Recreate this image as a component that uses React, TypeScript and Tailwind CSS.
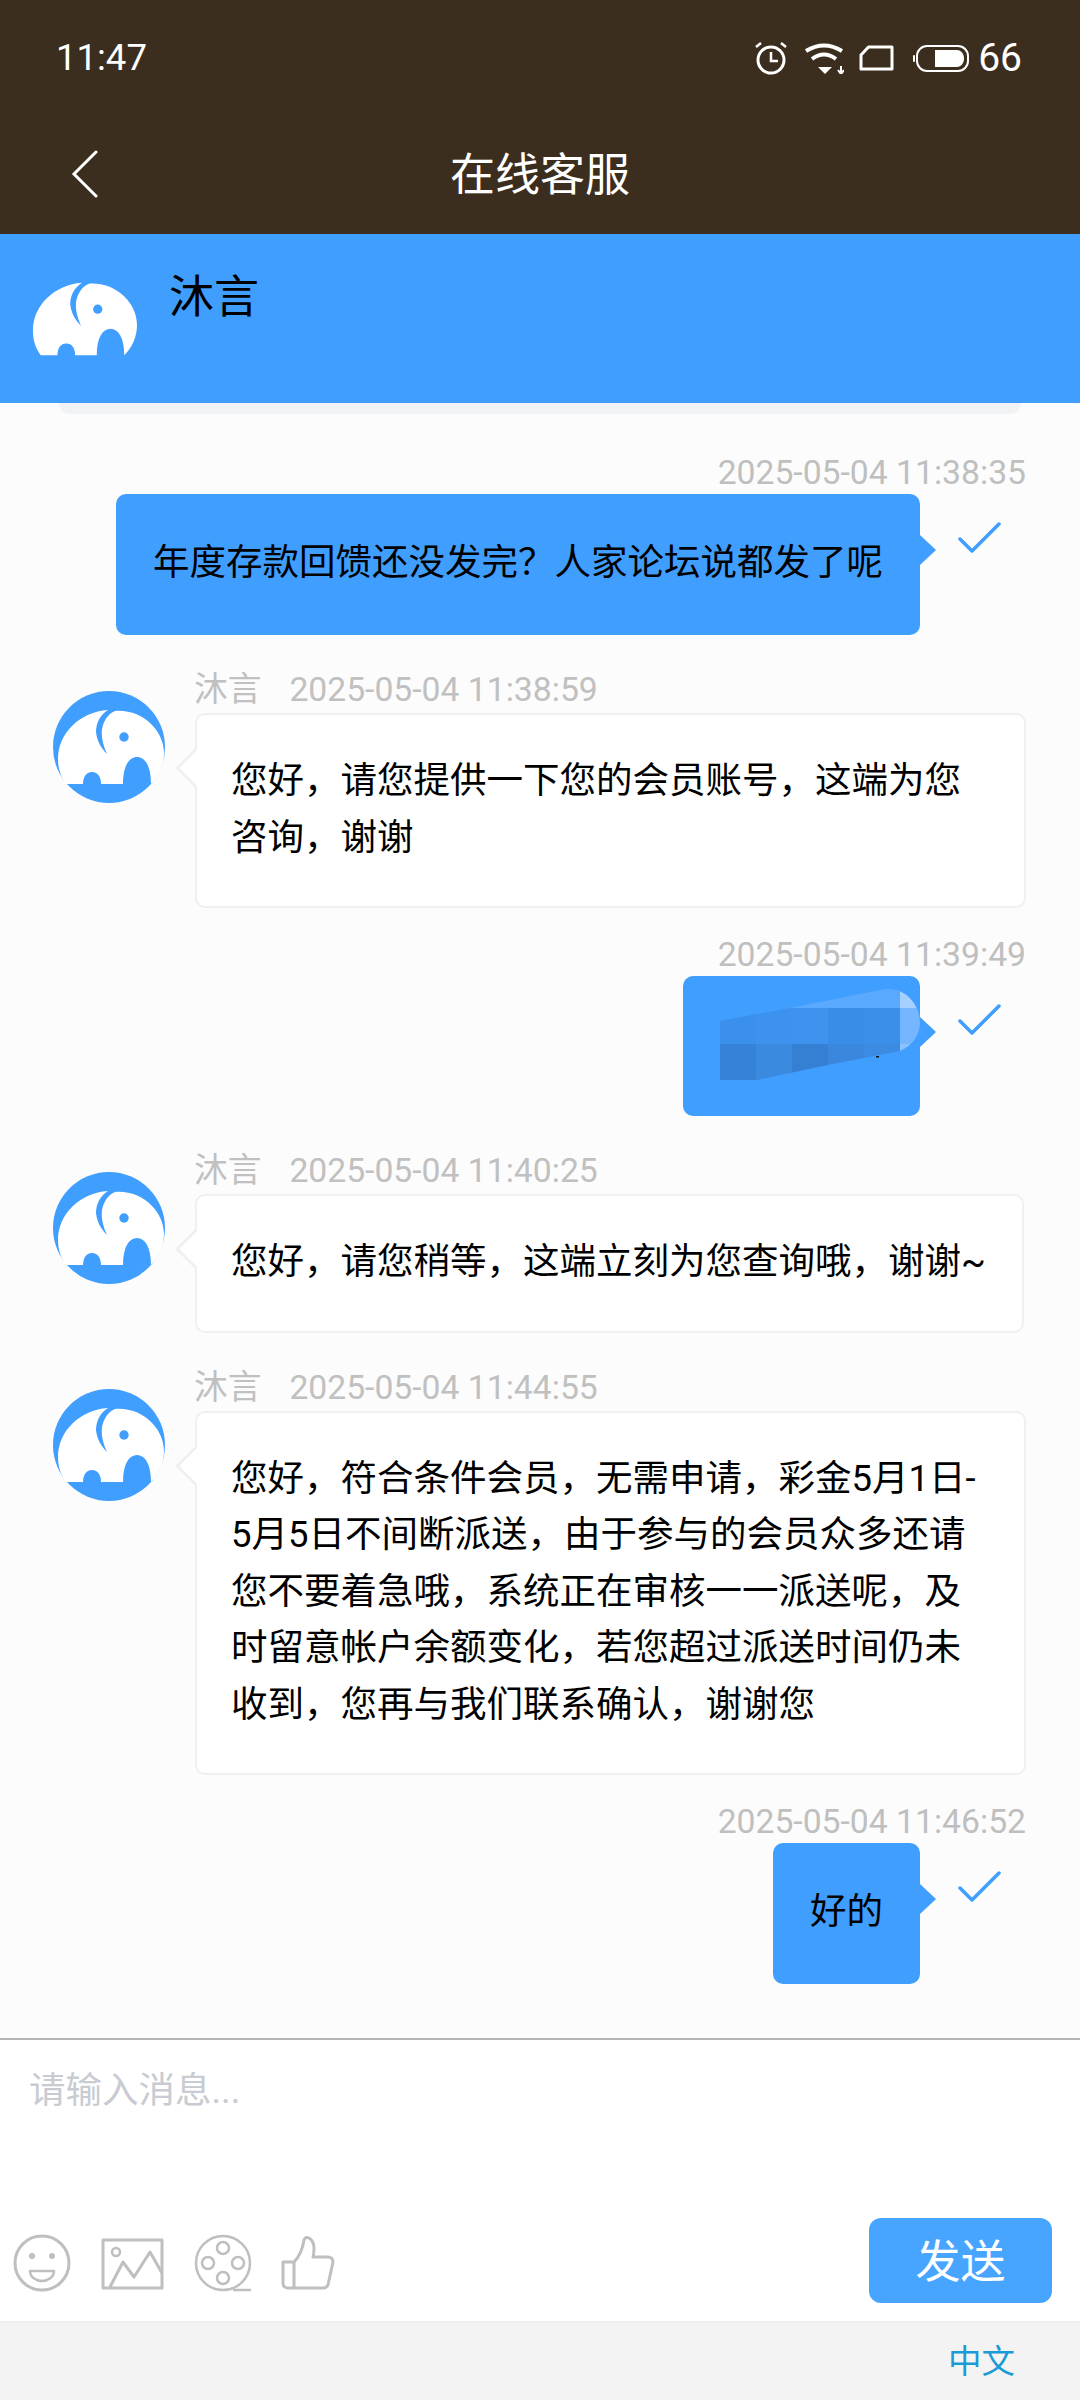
const FONT = "font-['Roboto','Noto_Sans_CJK_SC',sans-serif]";

type Message =
  | { id: number; from: "me"; time: string; text?: string }
  | { id: number; from: "agent"; time: string; text: string };

const messages: Message[] = [
  { id: 1, from: "me", time: "2025-05-04 11:38:35", text: "年度存款回馈还没发完\uFF1F人家论坛说都发了呢" },
  { id: 2, from: "agent", time: "2025-05-04 11:38:59", text: "您好\uFF0C请您提供一下您的会员账号\uFF0C这端为您咨询\uFF0C谢谢" },
  { id: 3, from: "me", time: "2025-05-04 11:39:49" },
  { id: 4, from: "agent", time: "2025-05-04 11:40:25", text: "您好\uFF0C请您稍等\uFF0C这端立刻为您查询哦\uFF0C谢谢~" },
  {
    id: 5,
    from: "agent",
    time: "2025-05-04 11:44:55",
    // zero-width space lets the date range wrap after the hyphen
    text: "您好\uFF0C符合条件会员\uFF0C无需申请\uFF0C彩金5月1日-\u200B5月5日不间断派送\uFF0C由于参与的会员众多还请您不要着急哦\uFF0C系统正在审核一一派送呢\uFF0C及时留意帐户余额变化\uFF0C若您超过派送时间仍未收到\uFF0C您再与我们联系确认\uFF0C谢谢您",
  },
  { id: 6, from: "me", time: "2025-05-04 11:46:52", text: "好的" },
];

const Elephant = ({ circle, size = 112 }: { circle?: boolean; size?: number }) => (
  <svg width={size} height={size} viewBox="0 0 112 112" className="shrink-0">
    {circle && <circle cx="56" cy="56" r="56" fill="#409eff" />}
    <path
      d="M13 93C7 85 5 76 5 68C5 42 27 21 55 19C47 24 43 32 43 41C44 50 48 57 54 63C50 54 48 46 49 38C51 29 55 23 62 20C90 18 111 40 111 62C111 74 106 85 98 93C98 75 92 66 84 66C76 66 70 75 70 93H48C48 86 45 81 39 81C33 81 30 86 30 93Z"
      fill="#fff"
    />
    <circle cx="71" cy="46" r="4.7" fill="#409eff" />
  </svg>
);

const Check = () => (
  <svg width="44" height="34" viewBox="0 0 44 34" fill="none" className="mt-[27px] ml-[38px] mr-[24px]">
    <path d="M2 18L14 30L41 3" stroke="#409eff" strokeWidth="3.5" strokeLinecap="round" strokeLinejoin="round" />
  </svg>
);

// mosaic over the account number in the sent bubble
const cells: [number, number, number, number, string][] = [
  [37, 13, 180, 19, "#59a9ff"],
  [217, 13, 20, 19, "#a4cfff"],
  [37, 32, 36, 36, "#3a90ea"],
  [73, 32, 36, 36, "#3c92ec"],
  [109, 32, 36, 36, "#3d93ee"],
  [145, 32, 36, 36, "#3a8de6"],
  [181, 32, 36, 36, "#3a8fe9"],
  [217, 32, 20, 36, "#74b6ff"],
  [37, 68, 36, 36, "#3582d8"],
  [73, 68, 36, 36, "#3a8ae0"],
  [109, 68, 36, 36, "#3680d4"],
  [145, 68, 36, 36, "#3a88de"],
  [181, 68, 36, 36, "#3c8ae2"],
  [217, 68, 20, 36, "#8cc2ff"],
];

const Mosaic = () => (
  <svg width="237" height="140" viewBox="0 0 237 140" className="absolute left-0 top-0">
    <defs>
      <clipPath id="mosaic-clip">
        <path d="M37 45L107 32L197 14C205 12 215 13 222 18C232 25 237 36 237 47C237 59 229 70 217 75L145 89L74 104H37Z" />
      </clipPath>
    </defs>
    <g clipPath="url(#mosaic-clip)">
      {cells.map(([x, y, w, h, fill]) => (
        <rect key={`${x}-${y}`} x={x} y={y} width={w} height={h} fill={fill} />
      ))}
    </g>
    <rect x="193" y="80" width="3" height="1.5" fill="#111" />
  </svg>
);

const SentMessage = ({ time, text }: { time: string; text?: string }) => (
  <div className="mt-[27px] pr-[54px] flex flex-col items-end">
    <div className="h-[40px] leading-[40px] text-[33.7px] text-[#bfbfbf]">{time}</div>
    <div className="flex items-start mt-px">
      <div className="relative">
        {text ? (
          <div className="rounded-[10px] bg-[#409eff] pl-[37px] pr-[37px] pt-[40px] pb-[44px] text-[36.5px] leading-[57px] text-black whitespace-nowrap">
            {text}
          </div>
        ) : (
          <div className="relative w-[237px] h-[140px] rounded-[10px] bg-[#409eff] overflow-hidden">
            <Mosaic />
          </div>
        )}
        <div className="absolute right-[-16px] top-[41px] w-0 h-0 border-y-[15px] border-y-transparent border-l-[16px] border-l-[#409eff]" />
      </div>
      <Check />
    </div>
  </div>
);

const AgentMessage = ({ time, text }: { time: string; text: string }) => (
  <div className="mt-[33px] pl-[53px] pr-[54px] flex items-start gap-[30px]">
    <div className="mt-[23px]">
      <Elephant circle />
    </div>
    <div className="min-w-0 flex-1">
      <div className="h-[45px] flex items-center gap-[28px] text-[33.7px] text-[#c0c0c0]">
        <span className="-ml-px">沐言</span>
        <span>{time}</span>
      </div>
      <div className="relative w-fit max-w-[831px] rounded-[10px] border-2 border-[#f0f0f0] bg-white pl-[34px] pr-[36px] pt-[38px] pb-[40px] text-[36.5px] leading-[56.5px] text-black">
        <div className="absolute left-[-16px] top-[39px] w-[28px] h-[28px] rotate-45 border-l-[3px] border-b-[3px] border-[#f0f0f0] bg-white" />
        <div className="relative">{text}</div>
      </div>
    </div>
  </div>
);

const StatusIcons = () => (
  <div className="flex items-center">
    <svg width="34" height="34" viewBox="0 0 34 34" fill="none" stroke="#fff" strokeWidth="3">
      <circle cx="17" cy="19" r="13" />
      <path d="M17 11V20H24" strokeWidth="2.5" />
      <path d="M2 6L7 2M32 6L27 2" strokeWidth="2.5" />
    </svg>
    <svg width="40" height="31" viewBox="0 0 40 31" fill="none" className="ml-[16px]">
      <path d="M2 8Q20 -3 38 8" stroke="#fff" strokeWidth="4" />
      <path d="M8 16Q20 7 32 16" stroke="#fff" strokeWidth="4" />
      <path d="M14 24H28L21 31Z" fill="#fff" />
      <path d="M37 23V29M34 27L37 31L40 27" stroke="#fff" strokeWidth="2" />
    </svg>
    <svg width="35" height="26" viewBox="0 0 35 26" fill="none" className="ml-[15px]">
      <path d="M2 24V10L9.5 2H33V24Z" stroke="#fff" strokeWidth="3" strokeLinejoin="round" />
    </svg>
    <svg width="56" height="27" viewBox="0 0 56 27" fill="none" className="ml-[19px]">
      <rect x="4" y="1" width="51" height="25" rx="10" stroke="#fff" strokeWidth="2" />
      <path d="M22 5H44C48 5 51 9 51 13.500C51 18 48 22 44 22H22Z" fill="#fff" />
      <path d="M1 11V16" stroke="#fff" strokeWidth="2" strokeLinecap="round" />
    </svg>
    <span className="ml-[9px] text-[39px] leading-none text-white">66</span>
  </div>
);

const ToolIcons = () => (
  <div className="flex items-center gap-[28px] text-[#bfbfbf] mb-[9px]">
    <svg width="60" height="60" viewBox="0 0 60 60" fill="none" stroke="currentColor" strokeWidth="3">
      <circle cx="30" cy="29" r="27" />
      <circle cx="20" cy="22" r="3" fill="currentColor" stroke="none" />
      <circle cx="40" cy="22" r="3" fill="currentColor" stroke="none" />
      <path d="M18 37H42C42 43 36 47 30 47C24 47 18 43 18 37Z" strokeWidth="2.500" strokeLinejoin="round" />
    </svg>
    <svg width="64" height="60" viewBox="0 0 64 60" fill="none" stroke="currentColor" strokeWidth="3">
      <rect x="3" y="6" width="59" height="48" strokeLinejoin="round" />
      <circle cx="16" cy="18" r="4" strokeWidth="2.500" />
      <path d="M10 53L23 28L34 43L50 18L62 39" strokeLinejoin="round" />
    </svg>
    <svg width="60" height="60" viewBox="0 0 60 60" fill="none" stroke="currentColor" strokeWidth="2.500" className="ml-px">
      <circle cx="30" cy="29" r="27" />
      <circle cx="30" cy="14" r="6" />
      <circle cx="30" cy="44" r="6" />
      <circle cx="15" cy="29" r="6" />
      <circle cx="45" cy="29" r="6" />
      <path d="M40 56H58" />
    </svg>
    <svg width="55" height="60" viewBox="0 0 55 60" fill="none" stroke="currentColor" strokeWidth="3" strokeLinejoin="round">
      <path d="M2 28H13C17 24 21 19 23 6C24 3 26 3 28 4C33 7 34 14 32 23H47C50 23 52 25 52 28L47 51C46 53 44 54 42 54H7C4 54 2 52 2 49Z" />
      <path d="M13 28V54" />
    </svg>
  </div>
);

export default function App() {
  return (
    <div className={`${FONT} w-[1080px] h-[2400px] flex flex-col bg-[#fcfcfc] overflow-hidden`}>
      <header className="h-[234px] bg-[#3c2e1f] shrink-0">
        <div className="h-[116px] pl-[56px] pr-[58px] flex items-center justify-between">
          <span className="text-[36.5px] leading-none text-white">11:47</span>
          <StatusIcons />
        </div>
        <div className="h-[118px] grid grid-cols-[1fr_auto_1fr] items-center">
          <svg width="28" height="48" viewBox="0 0 28 48" fill="none" className="ml-[71px] -mt-[2px]">
            <path d="M25 2L3 24L25 46" stroke="#fff" strokeWidth="3" strokeLinecap="round" />
          </svg>
          <h1 className="text-[45px] leading-none font-normal text-white mt-px">在线客服</h1>
        </div>
      </header>

      <div className="h-[169px] shrink-0 bg-[#409eff] pl-[28px] flex items-center gap-[31px]">
        <Elephant size={110} />
        <span className="text-[45px] leading-none text-black -mt-[42px]">沐言</span>
      </div>

      <main className="flex-1 min-h-0 overflow-hidden flex flex-col">
        <div className="mx-[59px] mb-[12px] h-[11px] shrink-0 rounded-b-[18px] bg-[#f1f3f5]" />
        {messages.map((m) =>
          m.from === "me" ? (
            <SentMessage key={m.id} time={m.time} text={m.text} />
          ) : (
            <AgentMessage key={m.id} time={m.time} text={m.text} />
          ),
        )}
      </main>

      <div className="h-[283px] shrink-0 border-t-2 border-[#b5b5b5] bg-white flex flex-col">
        <div className="mt-[26px] pl-[29px] h-[50px] leading-[50px] text-[36.5px] text-[#c8cbd1]">请输入消息...</div>
        <div className="mt-auto pl-[12px] pr-[28px] pb-[18px] flex items-end justify-between">
          <ToolIcons />
          <button className="w-[183px] h-[85px] rounded-[12px] bg-[#48a5ff] pt-[5px] text-[45px] text-white">发送</button>
        </div>
      </div>

      <div className="h-[79px] shrink-0 border-t-2 border-[#efefef] bg-[#f3f3f3] pr-[65px] flex items-center justify-end">
        <span className="text-[33.5px] leading-none text-[#1a9bd7]">中文</span>
      </div>
    </div>
  );
}
